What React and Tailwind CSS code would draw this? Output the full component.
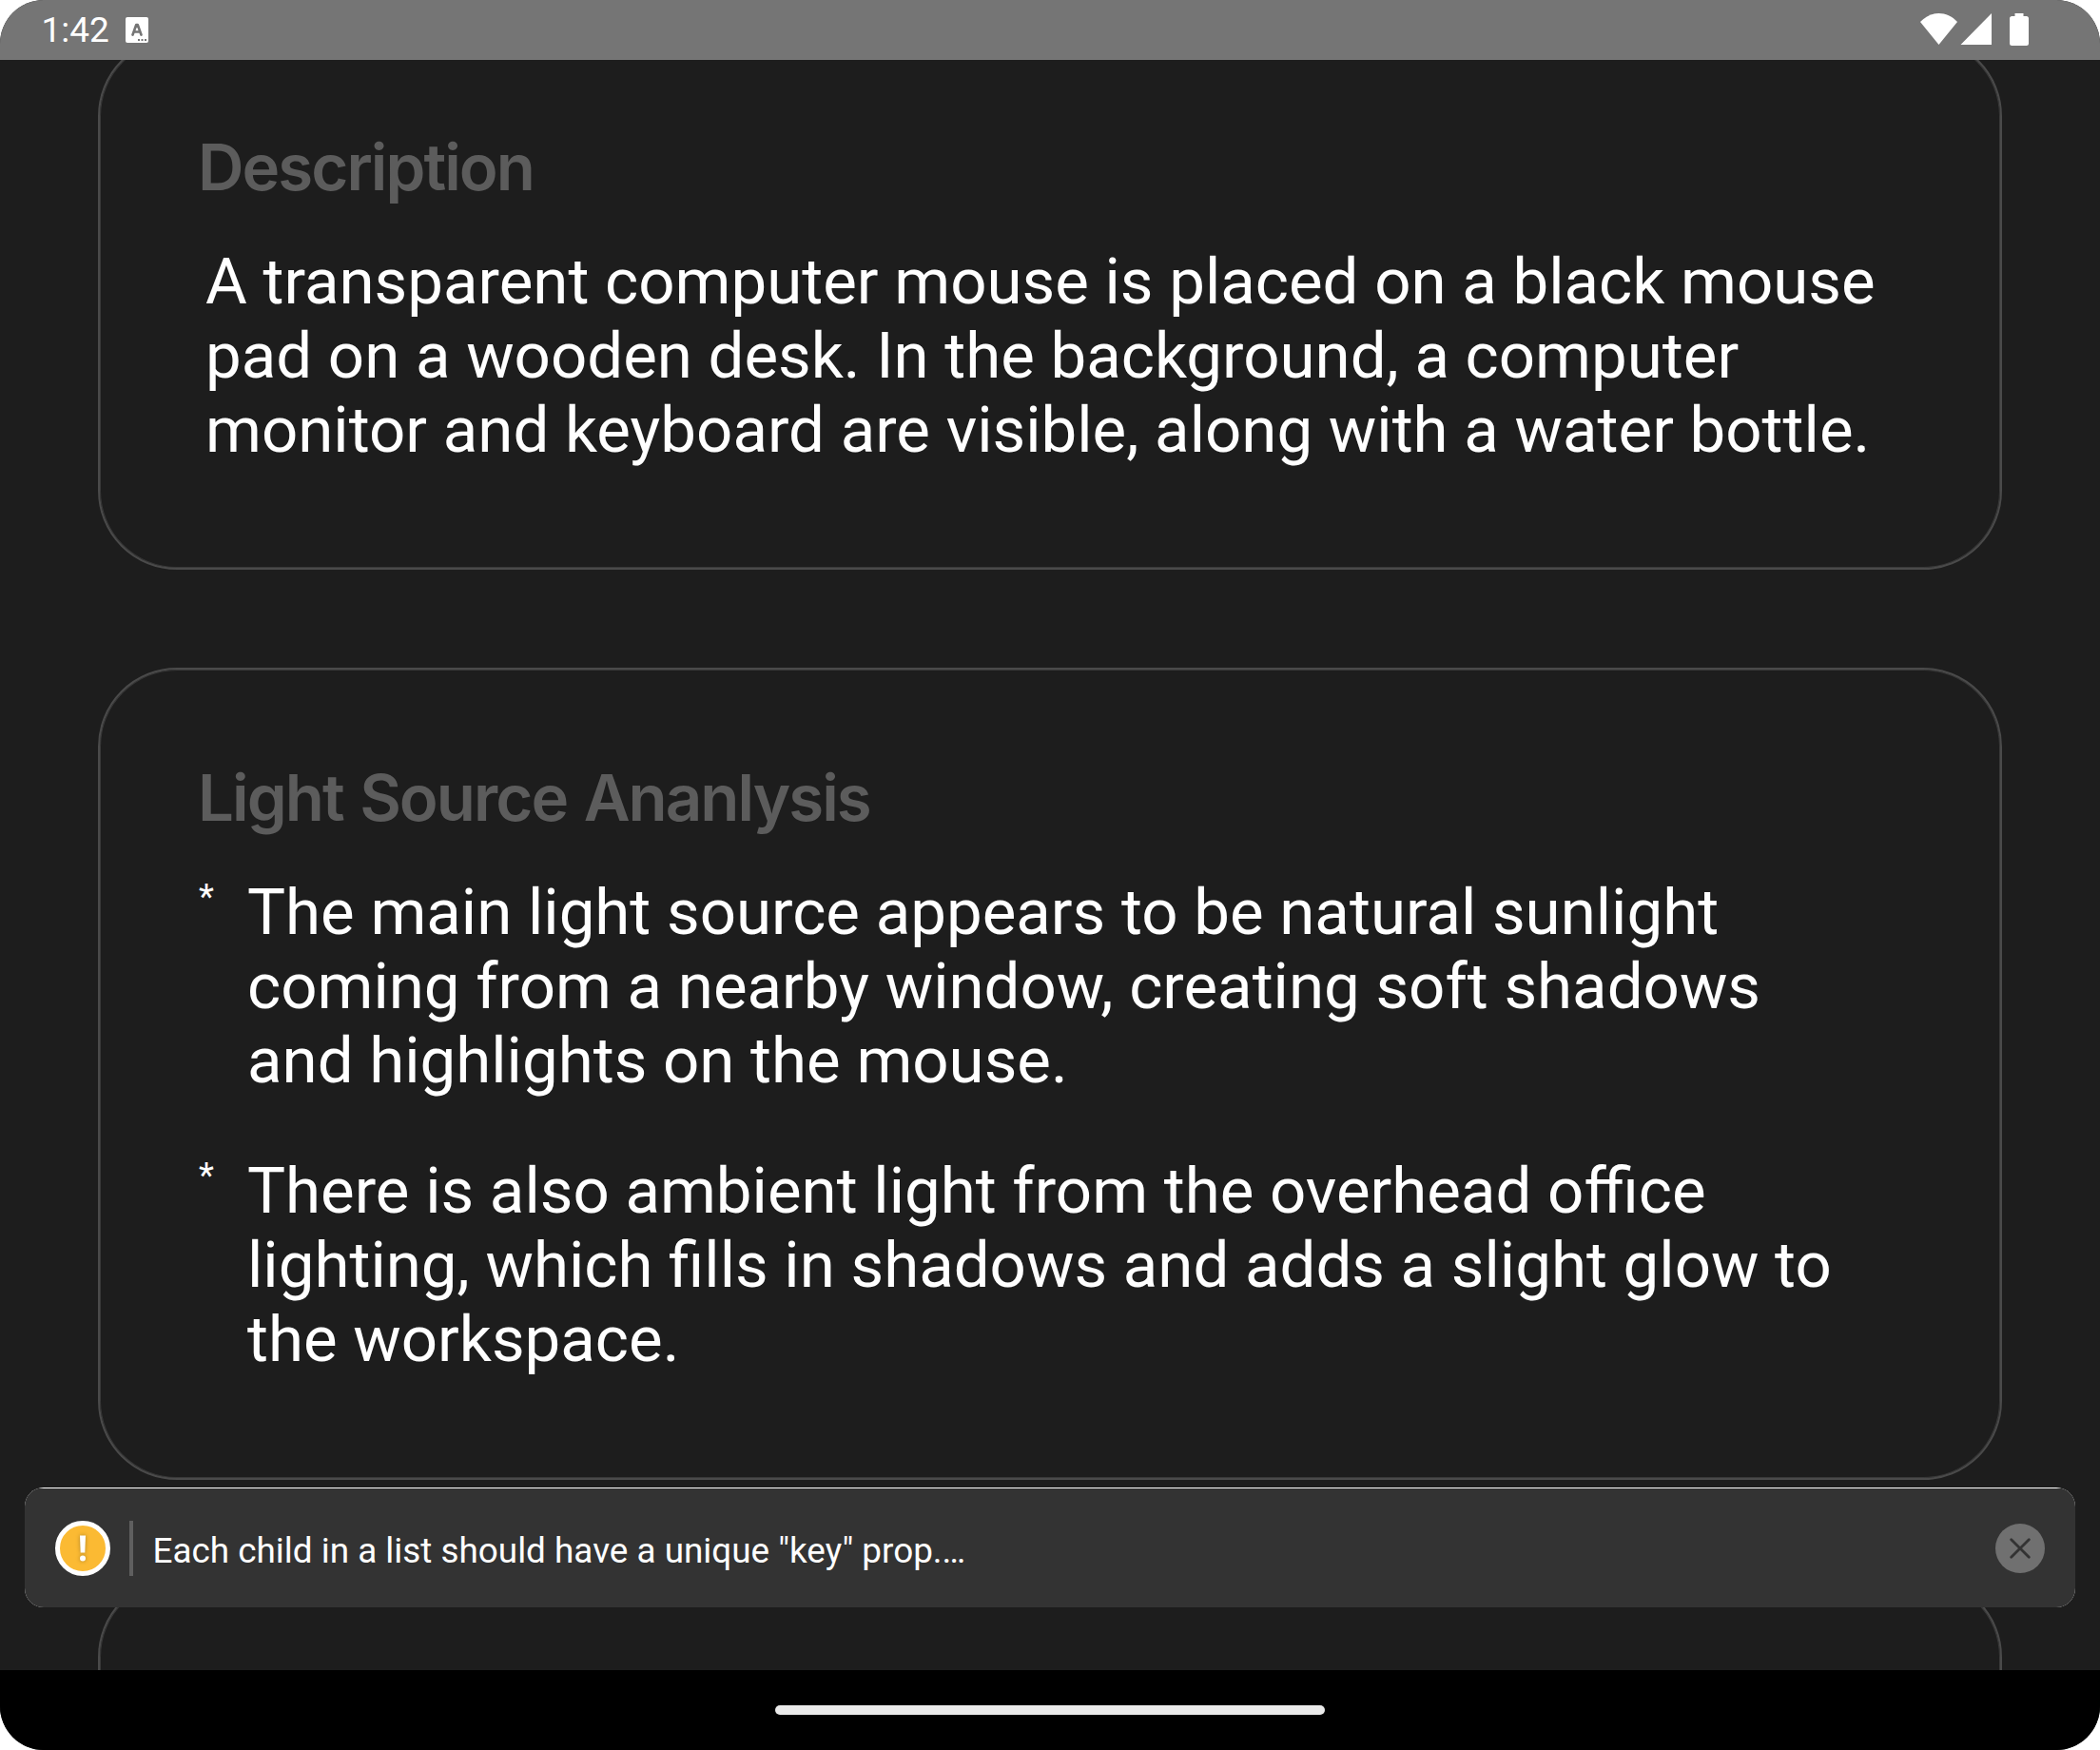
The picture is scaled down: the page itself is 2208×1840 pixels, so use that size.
const bullets = [
  ['The main light source appears to be natural sunlight', 'coming from a nearby window, creating soft shadows', 'and highlights on the mouse.'],
  ['There is also ambient light from the overhead office', 'lighting, which fills in shadows and adds a slight glow to', 'the workspace.'],
];

const description = [
  'A transparent computer mouse is placed on a black mouse',
  'pad on a wooden desk. In the background, a computer',
  'monitor and keyboard are visible, along with a water bottle.',
];

function StatusBar() {
  return (
    <header className="flex h-[63px] shrink-0 items-center justify-between bg-[#757575] pr-[75px] pl-[43.5px] text-white">
      <div className="flex items-center">
        <span className="w-[88.5px] text-[37px] leading-[63px] whitespace-nowrap">1:42</span>
        <svg width="24" height="27" viewBox="0 0 24 27">
          <rect width="24" height="27" rx="2" fill="#fff" />
          <path d="M7.5 18.600 11.300 8h1.400L16.500 18.600M8.900 15.500h6.200" fill="none" stroke="#757575" strokeWidth="2.7" strokeLinecap="round" strokeLinejoin="round" />
          <path d="M13 23h2v2h-2zM16.5 23h2v2h-2zM20 23h2v2h-2z" fill="#757575" />
        </svg>
      </div>
      <svg width="115" height="35" viewBox="0 0 115 35" fill="#fff">
        <path d="M1 9C12-3 29-3 40 9L20.500 33Z" />
        <path d="M43.500 33 76 0V33Z" />
        <path d="M100.500 0h9v3h3a2.500 2.500 0 0 1 2.500 2.500v26a2.500 2.500 0 0 1-2.500 2.500h-15a2.500 2.500 0 0 1-2.500-2.500v-26a2.500 2.500 0 0 1 2.500-2.500h3z" />
      </svg>
    </header>
  );
}

function Card({ title, className, children }) {
  return (
    <section className={`shrink-0 rounded-[83px] border-2 border-[#4a4a4a] px-[103px] pt-[95px] shadow-[inset_0_0_0_1px_#393939] ${className}`}>
      <h2 className="h-[82px] font-['Inter',sans-serif] text-[67.2px] leading-[80px] font-semibold tracking-[-1.96px] whitespace-nowrap text-[#5c5c5c] [word-spacing:2.5px]">{title}</h2>
      {children}
    </section>
  );
}

function Lines({ lines }) {
  return (
    <p className="text-[67.2px] leading-[78px] whitespace-nowrap text-white">
      {lines.map((line) => (
        <span key={line} className="block">{line}</span>
      ))}
    </p>
  );
}

function Toast() {
  return (
    <div className="absolute inset-x-[26px] top-[1564px] h-[126px] overflow-hidden rounded-[20px] bg-white pt-px">
      <div className="flex h-[125px] items-center bg-[#333333] px-8">
        <div className="flex size-[58px] items-center justify-center rounded-full border-[5px] border-white bg-[#fbba33]">
          <svg width="12" height="30" viewBox="0 0 12 30" className="drop-shadow-[0_0_2px_#00000050]">
            <path d="M3 1.500h6l-.7 18H3.700z" fill="#fff" />
            <circle cx="6" cy="25.500" r="3" fill="#fff" />
          </svg>
        </div>
        <div className="ml-5 h-[58px] w-1 bg-[#5f5f5f]" />
        <span className="ml-[20.5px] flex-1 pt-1.5 text-[36.86px] leading-[44px] whitespace-nowrap text-white">Each child in a list should have a unique "key" prop.…</span>
        <div className="flex size-[52px] items-center justify-center rounded-full bg-[#707070]">
          <svg width="22" height="22" viewBox="0 0 22 22">
            <path d="M1.700 1.700 20.300 20.300M20.300 1.700 1.700 20.300" stroke="#333" strokeWidth="2.800" strokeLinecap="round" />
          </svg>
        </div>
      </div>
    </div>
  );
}

export default function App() {
  return (
    <div className="h-[1840px] w-[2208px] bg-white">
      <div className="relative flex h-full w-full flex-col overflow-hidden rounded-[46px] bg-[#1d1d1d] font-['Roboto',sans-serif]">
        <StatusBar />
        <main className="h-[1693px] shrink-0 overflow-hidden px-[103px]">
          <div className="-mt-[24px] flex flex-col gap-[103px]">
            <Card title="Description" className="h-[560px]">
              <div className="mt-[39px] pl-2">
                <Lines lines={description} />
              </div>
            </Card>
            <Card title="Light Source Ananlysis" className="h-[854px]">
              <ul className="mt-[39px] flex flex-col gap-[59px] pl-px">
                {bullets.map((lines) => (
                  <li key={lines[0]} className="flex">
                    <span className="w-[51px] pt-px text-[37px] leading-[44px] text-white">*</span>
                    <Lines lines={lines} />
                  </li>
                ))}
              </ul>
            </Card>
            <Card title="" className="h-[400px]" />
          </div>
        </main>
        <Toast />
        <footer className="flex flex-1 justify-center bg-black pt-[37px]">
          <div className="h-[10px] w-[578px] rounded-full bg-[#eaeaea]" />
        </footer>
      </div>
    </div>
  );
}
